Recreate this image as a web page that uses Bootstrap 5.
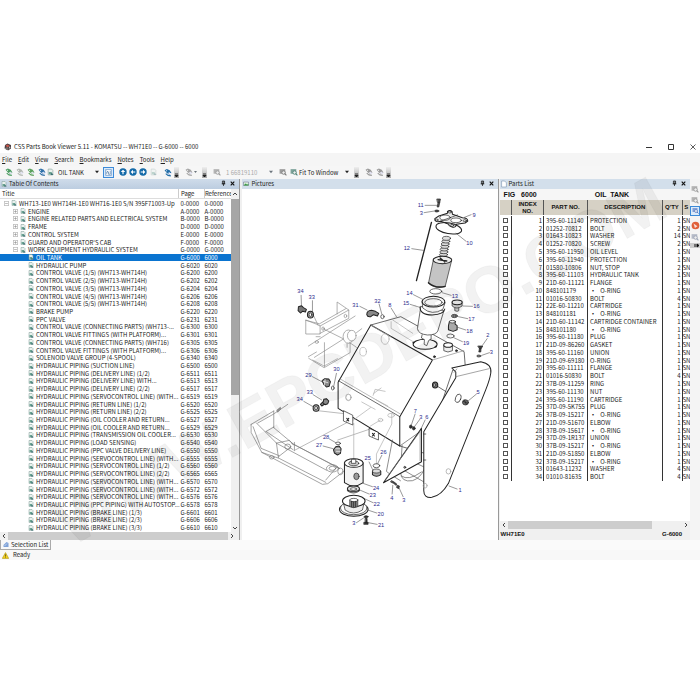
<!DOCTYPE html>
<html lang="en">
<head>
<meta charset="utf-8">
<meta name="viewport" content="width=device-width, initial-scale=1">
<title>CSS Parts Book Viewer 5.11</title>
<link rel="stylesheet" href="https://cdn.jsdelivr.net/npm/bootstrap@5.3.0/dist/css/bootstrap.min.css">
<style>
:root{--ui:"Noto Sans CJK SC","Liberation Sans",sans-serif}
body{font:6px/8px var(--ui);color:#222;background:#fff}
.viewer{height:60vh}
.titlebar{height:13px;font:6px/13px var(--ui);padding-left:4px;gap:2px}
.menubar{height:13px;background:#f5f5f5;font:6px/13px var(--ui);gap:6px;padding-left:2px}
.menubar a{color:#222;text-decoration:none}
.toolstrip{height:13px;background:#f6f6f6;padding-left:3px}
.toolstrip button,.sidebar button,.pane-head button,.titlebar button{border:0;background:none;padding:0;display:flex;align-items:center;justify-content:center;color:#222}
.toolstrip button{width:11px;height:11px}
.toolstrip .rounds button{width:10px}
.toolstrip button.on,.sidebar button.on{border:1px solid #3c8ad8;background:#dcebfa}
.toolstrip select{appearance:none;border:0;background:none;padding:0;height:11px;font:6px/11px var(--ui);color:#222}
.toolstrip select:disabled{color:#aaa;opacity:1}
.pick-book{width:37px}.pick-zoom{width:43px}.pick-fit{width:46px}
.grip{width:5px;height:11px;margin-left:1px;background:linear-gradient(#eee,#aaa);color:#111}
.panes{display:grid;grid-template-columns:34.2% 3px 1fr 2px 27.2% 10px;min-height:0}
.gutter{background:#f0f0f0;border-left:1px solid #999}
.pane{min-width:0;min-height:0;background:#fff}
.pane-head{height:10px;line-height:10px;background:linear-gradient(#cfdcea,#bccde0);gap:2px;padding:0 3px 0 1px}
.pane-head.idle{background:#d3dfeb}
.pane-head button{width:7px;height:9px}
.fill{min-height:0}
table{border-collapse:collapse;table-layout:fixed;width:100%;height:100%}
.toc{font:6px/7px var(--ui)}
.toc th{height:10px;font:6px/9px var(--ui);border-right:1px solid #ccc;border-bottom:1px solid #ddd;padding:0 1px 0 2px}
.toc th:last-child{border-right:0;padding:0}
.toc td{padding:0 0 0 2px;white-space:nowrap;vertical-align:middle}
.toc td:last-child{padding:0}
.toc .c-page{width:26px}.toc .c-ref{width:27px}
.toc .picked td{background:#0a74d0;color:#fff}
.node{display:flex;align-items:center;height:7px;gap:2px}
.node svg{flex:none}
.lv0{padding-left:2px}.lv1{padding-left:11px}.lv2{padding-left:26px}
.sb-v{width:8px;background:#f0f0f0}
.sb-v div{flex:0 0 57%;background:#a6a6a6}
.sb-h{height:8px;background:#f0f0f0}
.sb-h div{background:#cdcdcd}
.toc-thumb{flex:0 0 92%}.parts-thumb{flex:0 0 76%}
.fig{height:11px;font:bold 7px/11px "Liberation Sans",sans-serif;background:#f6f6f6;color:#111}
.fig div:first-child{width:50%;padding-left:4px}
.parts-wrap{height:87.5%}
.parts{font:6px/7px var(--ui)}
.parts th{height:16px;background:#d6d1c5;font:bold 6px/7px "Liberation Sans",sans-serif;text-align:center;color:#111;border-right:1px solid #555;border-bottom:1px solid #fff;padding:0;overflow:hidden}
.parts td{padding:0 0 0 2px;border-right:1px solid #333;white-space:nowrap;vertical-align:middle}
.parts td:nth-child(1){padding:0}
.parts td:nth-child(2),.parts td:nth-child(5){text-align:right;padding:0 1px}
.parts td:last-child,.parts th:last-child{border-right:0;padding:0}
.parts .w-a{width:12px}.parts .w-b{width:32px}.parts .w-c{width:44px}.parts .w-e{width:20px}.parts .w-f{width:8px}
.parts input{appearance:none;display:block;width:5px;height:5px;border:1px solid #555;background:#fff;margin:0 0 0 3px}
.foot{height:11px;font:bold 6px/11px "Liberation Sans",sans-serif;background:#f0f0f0;color:#111;padding:0 8px 0 1px}
.sidebar{background:#f4f4f4;padding-top:5px;gap:1px}
.sidebar button{width:10px;height:10px}
.tabs{height:10px;background:#fafafa;font:6px/9px var(--ui)}
.tabs button{font:inherit;color:#222;border:1px solid #aaa;border-top:0;background:#f8f8f8;padding:0 2px;display:flex;align-items:center;gap:2px}
.status{height:10px;background:#f8f8f8;font:6px/10px var(--ui);gap:4px;padding-left:2px}
.veil{pointer-events:none}
.drawing{width:100%;height:100%;display:block}
</style>
<script src="https://cdn.jsdelivr.net/npm/bootstrap@5.3.0/dist/js/bootstrap.bundle.min.js"></script>
</head>
<body class="position-relative min-vh-100 d-flex flex-column justify-content-center">
<svg width="0" height="0" class="position-absolute" aria-hidden="true">
<defs>
<symbol id="page" viewBox="0 0 12 12"><path d="M2 1h6l2 2v8H2z" fill="#e9f1ee" stroke="#7d9a94"/><path d="M3 6h5v4H3z" fill="#6aa392"/><path d="M8 7l3 4H6z" fill="#3b6f73"/></symbol>
<symbol id="plus" viewBox="0 0 9 9"><path d="M.5.5h8v8h-8zM2 4.500h5M4.500 2v5" fill="#fff" stroke="#888"/></symbol>
<symbol id="minus" viewBox="0 0 9 9"><path d="M.5.5h8v8h-8zM2 4.500h5" fill="#fff" stroke="#888"/></symbol>
<symbol id="tri" viewBox="0 0 6 6"><path d="M0 1h6L3 5z" fill="currentColor"/></symbol>
<symbol id="gripdots" viewBox="0 0 5 11"><path d="M1 7h3M1 8.500h3L2.500 10z" stroke="currentColor" stroke-width=".8"/></symbol>
<symbol id="tags" viewBox="0 0 14 14"><path d="M1 3l4-2 5 2 3 5-3 3-5-3z" fill="currentColor"/><path d="M3 9l4 3 5 1" fill="none" stroke="currentColor" stroke-width="2"/><circle cx="4.500" cy="4" r="1" fill="#fff"/><path d="M7 8l3-2v2h3v2h-3v1z" fill="#eef"/></symbol>
<symbol id="pin" viewBox="0 0 7 9"><path d="M2 1h3v4H2zM1 5h5M3.500 5v3" fill="none" stroke="#111"/><path d="M4 1v4" stroke="#111"/></symbol>
<symbol id="cross" viewBox="0 0 7 7"><path d="M1 1l5 5M6 1L1 6" stroke="#111" stroke-width="1.600"/></symbol>
<symbol id="scan" viewBox="0 0 14 14"><path d="M1 2h10v8H1z" fill="currentColor" opacity=".7"/><circle cx="8" cy="8" r="3" fill="#eee" stroke="currentColor" stroke-width="1.500"/><path d="M10 10l3 3" stroke="currentColor" stroke-width="2"/></symbol>
</defs>
</svg>

<main class="viewer d-flex flex-column">
<header class="titlebar d-flex align-items-center">
<svg width="8" height="8" viewBox="0 0 16 16" aria-hidden="true"><path d="M2 4l5-3 7 3v7l-6 4-4-4H1z" fill="#493f43"/><path d="M3 5l5-2 3 3-4 3z" fill="#c8574a"/><circle cx="6" cy="11" r="3" fill="#766d6a"/><path d="M10 7l3 1-2 4z" fill="#ddd"/></svg>
<span>CSS Parts Book Viewer 5.11 - KOMATSU -- WH71E0 -- G-6000 -- 6000</span>
<div class="ms-auto d-flex align-items-center gap-3 pe-1">
<button aria-label="Minimize"><svg width="6" height="6"><path d="M0 3.500h6" stroke="#333"/></svg></button>
<button aria-label="Maximize"><svg width="6" height="6"><path d="M.5.5h5v5h-5z" fill="none" stroke="#333"/></svg></button>
<button aria-label="Close"><svg width="6" height="6"><path d="M.5.5l5 5m0-5l-5 5" stroke="#333" stroke-width=".8"/></svg></button>
</div>
</header>
<nav class="menubar d-flex" aria-label="Main menu">
<a href="#"><u>F</u>ile</a><a href="#"><u>E</u>dit</a><a href="#"><u>V</u>iew</a><a href="#"><u>S</u>earch</a><a href="#"><u>B</u>ookmarks</a><a href="#"><u>N</u>otes</a><a href="#"><u>T</u>ools</a><a href="#"><u>H</u>elp</a>
</nav>
<div class="toolstrip d-flex align-items-center" role="toolbar" aria-label="Tools">
<button aria-label="Back" style="color:#4c9d62"><svg width="8" height="8"><use href="#tags"/></svg></button>
<button aria-label="Forward" style="color:#b2b8b2"><svg width="8" height="8"><use href="#tags"/></svg></button>
<button aria-label="Up" style="color:#5aa15c"><svg width="8" height="8"><use href="#tags"/></svg></button>
<button aria-label="Home" style="color:#2f70a8"><svg width="8" height="8"><use href="#tags"/></svg></button>
<svg width="7" height="8" class="me-1" aria-hidden="true"><use href="#page"/></svg>
<select class="pick-book" aria-label="Figure"><option>OIL TANK</option></select><svg width="4" height="4" aria-hidden="true"><use href="#tri"/></svg>
<button class="on ms-1" aria-label="Contents"><svg width="7" height="7" viewBox="0 0 12 12"><path d="M1 1h10v10H1z" fill="#fff" stroke="#4b83bd"/><path d="M3 3l2 2M3 9V5h3v4h3V3" fill="none" stroke="#37699c"/></svg></button>
<span class="rounds ms-1 d-flex">
<button aria-label="Top"><svg width="8" height="8" viewBox="0 0 14 14"><circle cx="7" cy="7" r="6.500" fill="#146aa8"/><path d="M7 3l4 4H8v4H6V7H3z" fill="#fff"/></svg></button>
<button aria-label="Previous"><svg width="8" height="8" viewBox="0 0 14 14"><circle cx="7" cy="7" r="6.500" fill="#146aa8"/><path d="M3 7l4-4v3h4v2H7v3z" fill="#fff"/></svg></button>
<button aria-label="Next"><svg width="8" height="8" viewBox="0 0 14 14"><circle cx="7" cy="7" r="6.500" fill="#146aa8"/><path d="M11 7L7 3v3H3v2h4v3z" fill="#fff"/></svg></button>
<button aria-label="Page"><svg width="7" height="8" opacity=".4"><use href="#page"/></svg></button></span>
<button class="ms-1" aria-label="Bookmark" style="color:#236ea8"><svg width="8" height="9"><use href="#tags"/></svg></button>
<svg class="grip" aria-hidden="true"><use href="#gripdots"/></svg>
<button class="ms-1" aria-label="Note" style="color:#a5a5a5"><svg width="8" height="8"><use href="#tags"/></svg></button>
<svg width="3" height="4" class="text-secondary me-1" aria-hidden="true"><use href="#tri"/></svg>
<svg class="grip" aria-hidden="true"><use href="#gripdots"/></svg>
<button class="ms-1 me-1" aria-label="Selection" style="color:#999"><svg width="8" height="8"><use href="#scan"/></svg></button>
<select class="pick-zoom" aria-label="Zoom value" disabled><option>1 66819110</option></select><svg width="4" height="4" class="text-secondary me-1" aria-hidden="true"><use href="#tri"/></svg>
<button aria-label="Zoom area" style="color:#777"><svg width="8" height="8"><use href="#scan"/></svg></button>
<button aria-label="Fit" style="color:#4a8073"><svg width="8" height="8"><use href="#scan"/></svg></button>
<select class="pick-fit" aria-label="Fit mode"><option>Fit To Window</option></select><svg width="4" height="4" class="me-1" aria-hidden="true"><use href="#tri"/></svg>
<svg class="grip" aria-hidden="true"><use href="#gripdots"/></svg>
<button class="ms-1" aria-label="Rotate left" style="color:#9a9a9a"><svg width="8" height="8"><use href="#tags"/></svg></button>
<button aria-label="Rotate right" style="color:#9a9a9a"><svg width="8" height="8"><use href="#tags"/></svg></button>
<svg class="grip" aria-hidden="true"><use href="#gripdots"/></svg>
</div>

<div class="panes flex-grow-1">
<section class="pane d-flex flex-column">
<div class="pane-head d-flex align-items-center"><svg width="6" height="8" aria-hidden="true"><use href="#page"/></svg><span class="me-auto">Table Of Contents</span><button aria-label="Pin contents"><svg width="5" height="7"><use href="#pin"/></svg></button><button aria-label="Close contents"><svg width="5" height="5"><use href="#cross"/></svg></button></div>
<div class="fill flex-grow-1 d-flex">
<div class="flex-grow-1 h-100 overflow-hidden">
<table class="toc"><thead><tr><th>Title</th><th class="c-page">Page</th><th class="c-ref">Reference</th></tr></thead><tbody id="tocRows"></tbody></table>
</div>
<div class="sb-v d-flex flex-column align-items-stretch" aria-hidden="true">
<svg width="8" height="10"><path d="M2 6l2-2 2 2" fill="none" stroke="#444"/></svg><div></div>
<svg width="8" height="8" class="mt-auto"><path d="M2 3l2 2 2-2" fill="none" stroke="#444"/></svg></div>
</div>
<div class="sb-h d-flex" aria-hidden="true"><svg width="8" height="8"><path d="M5 2L3 4l2 2" fill="none" stroke="#444"/></svg><div class="toc-thumb"></div><svg width="8" height="8"><path d="M3 2l2 2-2 2" fill="none" stroke="#444"/></svg></div>
</section>
<div class="gutter"></div>

<section class="pane d-flex flex-column">
<div class="pane-head idle d-flex align-items-center"><svg width="6" height="7" viewBox="0 0 12 12" aria-hidden="true"><path d="M1 3h10v7H1z" fill="#dcefdc" stroke="#668"/><path d="M1 10l4-4 3 2 3-1v3z" fill="#3b9b45"/></svg><span class="me-auto">Pictures</span><button aria-label="Pin pictures"><svg width="5" height="7"><use href="#pin"/></svg></button><button aria-label="Close pictures"><svg width="5" height="5"><use href="#cross"/></svg></button></div>
<div class="fill flex-grow-1">
<svg class="drawing" viewBox="3 -3 765 1053" role="img" aria-label="Oil tank exploded view" fill="none" stroke="#222" stroke-width="2" stroke-linejoin="round" stroke-linecap="round">
<!-- left bracket and frame -->
<g stroke="#8a8a8a" stroke-width="2">
<path d="M194 391v41h43v-24zM237 408l86-48v25l-86 45M288 372v-36l35 24M236 401l78-45M194 391l40 10M202 468l140-90M202 500l24-14M220 502l120-76M203 505l46 28 78-45v-35M250 458v72M225 440l12 0"/>
<ellipse cx="246" cy="416" rx="4" ry="5"/><ellipse cx="313" cy="378" rx="4" ry="5"/><ellipse cx="227" cy="456" rx="5" ry="4"/>
<path d="M246 416l80 40M217 376l14 30"/>
<ellipse cx="322" cy="440" rx="16" ry="20" fill="#fff"/><ellipse cx="332" cy="437" rx="13" ry="16" fill="#fff"/><ellipse cx="366" cy="485" rx="11" ry="13" fill="#fff"/>
<path d="M326 458l32 22M346 428l16-12M318 462v10"/>
</g>
<!-- lower left pipe frame -->
<g transform="translate(0 510)" stroke="#777">
<path d="M30 193l68-40M50 189l46-26 44-30M98 153v50M30 193v24l32 60 182 96 16-2 44-34M46 189l60 60 6 44M36 200l24 65 54 22M98 203l60 50 138 72M76 215l80 54M62 277l52 18 140 72M105 249l152 82M152 250l144 76M254 360l34-40M160 272v-25M107 249l38-8 12 14M74 215l24-14M112 290l36-28"/>
<ellipse cx="274" cy="325" rx="18" ry="11"/><ellipse cx="274" cy="325" rx="10" ry="6"/><ellipse cx="298" cy="334" rx="8" ry="10"/><ellipse cx="140" cy="260" rx="9" ry="8"/><ellipse cx="92" cy="292" rx="7" ry="5"/>
<path d="M108 150l10-8v6l-8 8z" fill="#999"/>
<path d="M230 152l80 9M162 270l170-90M290 240l100-34M215 0l34 18 40-22" stroke-width="1.500"/>
</g>
<!-- tank body -->
<g fill="#fff" stroke-width="3">
<path d="M389 405l90-25 190 105 4 50-38 5-84 250-75-22z" stroke-width="2"/>
<path d="M389 405l-98 172v78l185 113v-88l98-170z"/>
<path d="M292 572l184 108" stroke-width="2"/><path d="M296 566l182 106" stroke="#999" stroke-width="2"/>
<path d="M574 510l94-28" stroke="#888" stroke-width="2"/>
</g>
<g stroke="#aaa" stroke-width="2">
<path d="M389 405l60 36M450 395v20l66 40M455 390l60 40M398 610l22-16M396 616l6-18 30 6M406 630l34 18M362 636l40 22M338 700v110M452 672l0 30-46 90v30M330 695l58-42M418 690l-30 18"/>
<ellipse cx="322" cy="622" rx="8" ry="10"/><ellipse cx="432" cy="447" rx="12" ry="16"/><ellipse cx="418" cy="690" rx="7" ry="5"/><ellipse cx="450" cy="676" rx="10" ry="6"/><ellipse cx="366" cy="485" rx="10" ry="13"/>
</g>
<path d="M307 663v30l28 12v-28zM384 716v22l28 12v-22z" fill="#fff"/><path d="M317 685l6 8m0-8l-6 8M394 730l6 8m0-8l-6 8" stroke-width="3"/>
<!-- filter column -->
<g transform="translate(369 0)">
<path d="M219 27h10l-2 10h-6zM222 37l-3 14h5l3-14" fill="#555"/><ellipse cx="218" cy="63" rx="6" ry="3" fill="#444"/>
<path d="M212 86l12-8 26-8 0-6q8-6 14 1l1 8 30 10q16 0 16 10l-8 6-26 4q-2 11-13 8t-10-8l-24-9q-18 4-18-8z" fill="#eee" stroke-width="3"/>
<ellipse cx="243" cy="83" rx="16" ry="8" fill="#fff"/><ellipse cx="276" cy="91" rx="16" ry="7" fill="#fff"/><path d="M230 93l50-18"/>
<ellipse cx="217" cy="90" rx="5" ry="3"/><ellipse cx="257" cy="66" rx="5" ry="3"/><ellipse cx="302" cy="92" rx="5" ry="3"/><ellipse cx="264" cy="106" rx="5" ry="3"/>
<ellipse cx="254" cy="115" rx="39" ry="16" transform="rotate(10 254 115)" stroke-width="3"/>
<g fill="#ddd"><ellipse cx="237" cy="202" rx="12" ry="5"/><ellipse cx="238" cy="194" rx="12" ry="5"/><ellipse cx="239" cy="186" rx="12" ry="5"/><ellipse cx="240" cy="178" rx="12" ry="5"/><ellipse cx="242" cy="170" rx="12" ry="5"/><ellipse cx="243" cy="162" rx="12" ry="5"/><ellipse cx="245" cy="154" rx="12" ry="5"/><ellipse cx="247" cy="145" rx="12" ry="6"/></g>
<path d="M202 97l-45 175" stroke-width="4"/>
<path d="M208 208l-15 72q20 18 50 10l19-76z" fill="#c4c4c4"/><path d="M193 278q20 18 50 11" stroke-width="4"/>
<ellipse cx="235" cy="210" rx="28" ry="11" fill="#eee" stroke-width="3"/><path d="M222 209l26 4m-20-9l14 12" stroke-width="4"/>
<ellipse cx="215" cy="304" rx="18" ry="8"/>
<ellipse cx="183" cy="463" rx="36" ry="15" stroke-width="3"/>
<path d="M174 434l-2 10 9 5-1 14 8 4 6-16 7-4 0-12" fill="#fff"/><path d="M170 350l-10 66q2 16 30 19 26 0 31-12l18-60z" fill="#fff"/>
<path d="M174 334l2 20q28 24 60 4l7-20" fill="#fff"/><ellipse cx="208" cy="335" rx="34" ry="16" fill="#fff" stroke-width="3"/><ellipse cx="208" cy="337" rx="26" ry="11"/>
<path d="M168 350q-2 24 36 25 36-2 38-18" stroke-width="3"/>
<path d="M264 336v12q14 12 30 0v-12M272 354v8q8 4 12 0v-8" fill="#ccc"/><ellipse cx="279" cy="337" rx="15" ry="7" fill="#eee" stroke-width="3"/>
<ellipse cx="271" cy="378" rx="9" ry="5" fill="#999"/><ellipse cx="271" cy="378" rx="4" ry="2" fill="#fff"/>
<path d="M256 394h17v8l6 5v12l-12 5-14-5v-12z" fill="#aaa" stroke-width="3"/><ellipse cx="265" cy="395" rx="9" ry="4" fill="#eee"/>
<ellipse cx="259" cy="438" rx="11" ry="6"/>
<path d="M239 466v16q12 8 26 0v-16" fill="#eee"/><ellipse cx="252" cy="465" rx="13" ry="7" fill="#fff" stroke-width="3"/>
<g fill="#333"><circle cx="211" cy="500" r="3"/><circle cx="277" cy="482" r="3"/><circle cx="148" cy="458" r="2"/><circle cx="215" cy="470" r="2"/></g>
<path d="M8 374q0-12 14-13l12 3 10 6-4 8-12-4-8 6q-10 2-12-6z" fill="#888" stroke-width="3"/><ellipse cx="55" cy="380" rx="5" ry="6"/>
<path d="M342 468h14l-4 7h-6zM346 475l-2 11h6l1-11" fill="#444"/><ellipse cx="344" cy="498" rx="6" ry="3" fill="#888"/>
</g>
<!-- right plate, brackets and fittings -->
<g transform="translate(369 510)">
<path d="M107 258l65-46M114 256l-5 80q2 32 36 26 24-8 34-32M85 240l-18 94 10 8 32 20M118 330l60 35M120 285v40M148 306l30 14M112 348q20 16 60-12" stroke="#555"/>
<path d="M263 24l87-19q34 6 30 34-3 20-15 50L253 370q-22 38-50 42-24 2-24-20V215l96-162V36z" fill="#fff" stroke-width="3"/>
<path d="M275 50l100-24M270 37l8-10" stroke="#777"/>
<path d="M58 368l114-163v100z" fill="#fff" stroke-width="3"/><path d="M64 358l104-144v88" stroke="#777"/><circle cx="122" cy="322" r="3" fill="#999"/>
<path d="M179 222h6m-6 78h6" />
<ellipse cx="213" cy="75" rx="8" ry="9" fill="#777" stroke-width="3"/><ellipse cx="212" cy="75" rx="3" ry="4" fill="#fff"/><path d="M222 80l24 15"/>
<ellipse cx="282" cy="115" rx="8" ry="13" transform="rotate(20 282 115)"/><ellipse cx="304" cy="127" rx="9" ry="8" fill="#666"/><path d="M297 124l14 6m-10-10l6 14"/>
<ellipse cx="253" cy="334" rx="7" ry="8" stroke="#999"/><ellipse cx="183" cy="377" rx="6" ry="7" stroke="#999"/>
<ellipse cx="140" cy="200" rx="4" ry="5" fill="#333"/><ellipse cx="149" cy="205" rx="4" ry="5" fill="#333"/>
<path d="M80 366l8 4 8 6 2-4-8-6-7-4zM100 376l6 2-2 8-6-3z" fill="#444"/>
<ellipse cx="37" cy="317" rx="10" ry="6"/><path d="M25 334v10q12 10 25 0v-10" fill="#aaa" stroke-width="3"/><ellipse cx="37" cy="333" rx="12" ry="6" fill="#ddd"/>
</g>
<!-- lower filter and small fittings -->
<g transform="translate(0 510)">
<path d="M310 308v60q28 20 56 0v-60z" fill="#f4f4f4" stroke-width="3"/><ellipse cx="338" cy="309" rx="28" ry="13" fill="#fff" stroke-width="3"/><ellipse cx="338" cy="310" rx="15" ry="7" fill="#ccc"/><path d="M332 298h12v12h-12z" fill="#fff"/>
<ellipse cx="346" cy="349" rx="8" ry="10" fill="#999"/>
<path d="M319 386v7q18 12 36 0v-7" fill="#bbb"/><ellipse cx="337" cy="386" rx="18" ry="8" fill="#ddd" stroke-width="3"/><ellipse cx="337" cy="387" rx="9" ry="4" fill="#fff"/>
<ellipse cx="338" cy="448" rx="43" ry="21" fill="#eee" stroke-width="3"/><ellipse cx="338" cy="444" rx="40" ry="20" fill="#fff"/><path d="M306 424l6 26q25 18 52 0l6-26" fill="#eee"/>
<ellipse cx="338" cy="423" rx="34" ry="17" fill="#fff" stroke-width="3"/><path d="M326 420v20q12 6 24 0v-20" fill="#999"/><ellipse cx="338" cy="420" rx="12" ry="5" fill="#fff"/><path d="M332 424v16m6-15v16m6-17v16" stroke-width="3"/>
<ellipse cx="375" cy="470" rx="6" ry="3" fill="#333"/><path d="M373 475h5v12h-5zM369 487h12v6h-12z" fill="#333"/>
<path d="M243 62l8-6 12 1 5 8-4 14-8 2-8-8z" fill="#888" stroke-width="3"/><path d="M246 64l14 4m-8-10l-2 18" stroke="#fff"/><ellipse cx="275" cy="84" rx="4" ry="6"/>
<path d="M248 118l8-2 7 7-3 8-8 3-6-5zM246 125l-8 8 4 5 9-6" fill="#888" stroke-width="3"/><ellipse cx="225" cy="144" rx="9" ry="10" fill="#aaa" stroke-width="3"/><ellipse cx="225" cy="144" rx="4" ry="5" fill="#fff"/>
<ellipse cx="291" cy="250" rx="7" ry="4"/><path d="M284 260l10-2 6 8-2 14-9 5-9-6-3-10z" fill="#999" stroke-width="3"/><path d="M284 266h12m-10 8h11" stroke="#fff"/>
<ellipse cx="322" cy="112" rx="8" ry="9" stroke="#aaa"/>
</g>
<!-- upper left bolt and washer -->
<path d="M172 350l9-3 6 6 9 5-3 8-9-2-6 5-7-7z" fill="#777" stroke-width="3"/><ellipse cx="208" cy="374" rx="9" ry="10" fill="#999" stroke-width="3"/><ellipse cx="208" cy="374" rx="4" ry="5" fill="#fff"/>
<g id="leaders" stroke-width="1.500" stroke="#333"></g>
<g id="callouts" fill="#2b2b8c" stroke="none" font-family="Liberation Sans, sans-serif" font-size="17" text-anchor="middle"></g>
</svg>
</div>
</section>
<div class="gutter"></div>

<section class="pane d-flex flex-column">
<div class="pane-head idle d-flex align-items-center"><svg width="6" height="8" viewBox="0 0 10 12" aria-hidden="true"><path d="M1 1h5l3 3v7H1z" fill="#fff" stroke="#7a93b0"/></svg><span class="me-auto">Parts List</span><button aria-label="Pin parts"><svg width="5" height="7"><use href="#pin"/></svg></button><button aria-label="Close parts"><svg width="5" height="5"><use href="#cross"/></svg></button></div>
<div class="fig d-flex"><div>FIG &nbsp; 6000</div><div>OIL &nbsp;TANK</div></div>
<div class="fill flex-grow-1">
<div class="parts-wrap overflow-hidden">
<table class="parts"><thead><tr><th class="w-a"></th><th class="w-b">INDEX<br>NO.</th><th class="w-c">PART NO.</th><th>DESCRIPTION</th><th class="w-e">Q'TY</th><th class="w-f">S</th></tr></thead><tbody id="partRows"></tbody></table>
</div></div>
<div class="sb-h d-flex" aria-hidden="true"><svg width="8" height="8"><path d="M5 2L3 4l2 2" fill="none" stroke="#444"/></svg><div class="parts-thumb"></div><svg width="8" height="8" class="ms-auto"><path d="M3 2l2 2-2 2" fill="none" stroke="#444"/></svg></div>
<div class="foot d-flex justify-content-between"><span>WH71E0</span><span>G-6000</span></div>
</section>

<div class="sidebar d-flex flex-column align-items-center">
<button aria-label="Add" style="color:#999"><svg width="8" height="8"><use href="#scan"/></svg></button>
<button aria-label="Remove" style="color:#999"><svg width="8" height="8"><use href="#scan"/></svg></button>
<button class="on" aria-label="List" style="color:#5d7fc4"><svg width="7" height="7"><use href="#scan"/></svg></button>
<button class="mt-1" aria-label="Alert"><svg width="9" height="9" viewBox="0 0 14 14"><circle cx="7" cy="7" r="6" fill="#e0603a"/><path d="M4 4l6 4-4 3z" fill="#fff" opacity=".8"/></svg></button>
<button aria-label="Search" style="color:#9aa3b5"><svg width="8" height="8"><use href="#scan"/></svg></button>
<svg width="10" height="5" aria-hidden="true"><path d="M0 0h10v5H0z" fill="#ccc"/><path d="M5 1v3M7 1v3l2-1.500z" stroke="#111"/></svg>
</div>
</div>
<div class="tabs d-flex"><button><svg width="6" height="7" viewBox="0 0 12 12" aria-hidden="true"><path d="M1 7l6-6 4 2v8H1z" fill="#7fa2d8"/><path d="M3 9l5-5" stroke="#fff"/></svg>Selection List</button></div>
<footer class="status d-flex align-items-center"><svg width="7" height="7" viewBox="0 0 12 12" aria-hidden="true"><path d="M6 1l5.500 10H.5z" fill="#f5d21c" stroke="#a98f12"/><path d="M6 4v4M6 9v1" stroke="#222"/></svg><span>Ready</span></footer>
</main>

<svg class="veil position-absolute top-0 start-0 w-100 h-100" viewBox="0 0 700 700" aria-hidden="true">
<text x="360" y="361" transform="rotate(-29 360 361)" text-anchor="middle" dominant-baseline="central" font-family="Liberation Sans, sans-serif" font-weight="bold" font-size="65" fill="#000" fill-opacity=".05" stroke="#000" stroke-opacity=".03">WWW.EPCDEPO.COM</text>
</svg>

<script>
const toc = `0|WH713-1E0 WH714H-1E0 WH716-1E0 S/N 395F71003-Up|0-0000|0-0000
1|ENGINE|A-0000|A-0000
1|ENGINE RELATED PARTS AND ELECTRICAL SYSTEM|B-0000|B-0000
1|FRAME|D-0000|D-0000
1|CONTROL SYSTEM|E-0000|E-0000
1|GUARD AND OPERATOR'S CAB|F-0000|F-0000
1|WORK EQUIPMENT HYDRAULIC SYSTEM|G-0000|G-0000
2|OIL TANK|G-6000|6000
2|HYDRAULIC PUMP|G-6020|6020
2|CONTROL VALVE (1/5)  (WH713-WH714H)|G-6200|6200
2|CONTROL VALVE (2/5)  (WH713-WH714H)|G-6202|6202
2|CONTROL VALVE (3/5)  (WH713-WH714H)|G-6204|6204
2|CONTROL VALVE (4/5)  (WH713-WH714H)|G-6206|6206
2|CONTROL VALVE (5/5)  (WH713-WH714H)|G-6208|6208
2|BRAKE PUMP|G-6220|6220
2|PPC VALVE|G-6231|6231
2|CONTROL VALVE (CONNECTING PARTS) (WH713-...|G-6300|6300
2|CONTROL VALVE FITTINGS (WITH PLATFORM)...|G-6301|6301
2|CONTROL VALVE (CONNECTING PARTS) (WH716)|G-6305|6305
2|CONTROL VALVE FITTINGS (WITH PLATFORM)...|G-6306|6306
2|SOLENOID VALVE GROUP (4-SPOOL)|G-6340|6340
2|HYDRAULIC PIPING (SUCTION LINE)|G-6500|6500
2|HYDRAULIC PIPING (DELIVERY LINE) (1/2)|G-6511|6511
2|HYDRAULIC PIPING (DELIVERY LINE) WITH...|G-6513|6513
2|HYDRAULIC PIPING (DELIVERY LINE) (2/2)|G-6517|6517
2|HYDRAULIC PIPING (SERVOCONTROL LINE) (WITH...|G-6519|6519
2|HYDRAULIC PIPING (RETURN LINE) (1/2)|G-6520|6520
2|HYDRAULIC PIPING (RETURN LINE) (2/2)|G-6525|6525
2|HYDRAULIC PIPING (OIL COOLER AND RETURN...|G-6527|6527
2|HYDRAULIC PIPING (OIL COOLER AND RETURN...|G-6529|6529
2|HYDRAULIC PIPING (TRANSMISSION OIL COOLER...|G-6530|6530
2|HYDRAULIC PIPING (LOAD SENSING)|G-6540|6540
2|HYDRAULIC PIPING (PPC VALVE DELIVERY LINE)|G-6550|6550
2|HYDRAULIC PIPING (SERVOCONTROL LINE) (WITH...|G-6555|6555
2|HYDRAULIC PIPING (SERVOCONTROL LINE) (1/2)|G-6560|6560
2|HYDRAULIC PIPING (SERVOCONTROL LINE) (2/2)|G-6565|6565
2|HYDRAULIC PIPING (SERVOCONTROL LINE) (WITH...|G-6570|6570
2|HYDRAULIC PIPING (SERVOCONTROL LINE) (WITH...|G-6572|6572
2|HYDRAULIC PIPING (SERVOCONTROL LINE) (WITH...|G-6576|6576
2|HYDRAULIC PIPING (PPC PIPING) WITH AUTOSTOP...|G-6578|6578
2|HYDRAULIC PIPING (BRAKE LINE) (1/3)|G-6601|6601
2|HYDRAULIC PIPING (BRAKE LINE) (2/3)|G-6606|6606
2|HYDRAULIC PIPING (BRAKE LINE) (3/3)|G-6610|6610`.split("\n").map(r => r.split("|"));
document.getElementById("tocRows").innerHTML = toc.map(([lv, t, p, r]) => {
  const box = lv === "2" ? "" : `<svg width="5" height="5"><use href="#${lv === "0" || t.startsWith("WORK") ? "minus" : "plus"}"/></svg>`;
  return `<tr class="${t === "OIL TANK" ? "picked" : ""}"><td><div class="node lv${lv}">${box}<svg width="6" height="6"><use href="#page"/></svg><span>${t}</span></div></td><td>${p}</td><td>${r}</td></tr>`;
}).join("");

const parts = `395-60-11140|PROTECTION|1
01252-70812|BOLT|2
01643-10823|WASHER|14
01252-70820|SCREW|2
395-60-11950|OIL LEVEL|1
395-60-11940|PROTECTION|1
01580-10806|NUT, STOP|2
395-60-11103|HYDRAULIC TANK|1
21D-60-11121|FLANGE|1
848101179|*O-RING|1
01016-50830|BOLT|4
22E-60-11210|CARTRIDGE|1
848101181|*O-RING|1
21D-60-11142|CARTRIDGE CONTAINER|1
848101180|*O-RING|1
395-60-11180|PLUG|1
21D-09-86260|GASKET|1
395-60-11160|UNION|1
21D-09-69180|O-RING|1
395-60-11111|FLANGE|1
01016-50830|BOLT|4
37B-09-11259|RING|1
395-60-11130|NUT|1
395-60-11190|CARTRIDGE|1
37D-09-5K755|PLUG|1
37B-09-15217|*O-RING|1
21D-09-51670|ELBOW|1
37B-09-15617|*O-RING|1
37D-09-1R137|UNION|1
37B-09-15217|*O-RING|1
21D-09-51850|ELBOW|1
37B-09-15217|*O-RING|1
01643-11232|WASHER|4
01010-81635|BOLT|4`.split("\n").map(r => r.split("|"));
document.getElementById("partRows").innerHTML = parts.map(([n, d, q], i) =>
  `<tr><td><input type="checkbox" aria-label="Select item ${i + 1}"></td><td>${i + 1}</td><td>${n}</td><td>${d.replace("*", "<b>·</b>&nbsp;&nbsp; ")}</td><td>${q}</td><td>SN</td></tr>`).join("");

// number, label centre, then the leader's two ends
const marks = [
[11,539,46,552,46,588,46],[3,541,70,549,68,580,63],[9,699,74,690,74,670,82],[10,685,159,675,154,645,130],[12,497,174,512,176,546,181],
[13,641,318,630,316,603,308],[14,505,310,517,314,545,328],[15,495,340,507,343,536,352],[16,706,349,694,349,666,348],[17,691,388,680,386,652,380],
[18,685,423,674,420,650,412],[19,675,459,664,455,638,443],[32,409,332,414,342,422,372],[8,446,345,450,354,466,380],[2,740,436,738,446,724,466],
[3,751,487,745,488,722,496],[34,178,304,180,316,181,345],[33,212,321,214,332,214,364],[31,343,345,356,349,378,360],[29,202,554,214,560,244,576],
[30,286,538,286,550,278,588],[33,206,607,216,614,242,630],[34,176,627,188,634,216,650],[28,255,742,265,747,284,758],[27,234,764,246,768,276,776],
[25,380,803,384,816,396,842],[26,427,786,422,796,410,820],[24,405,894,394,890,366,880],[23,395,916,384,912,356,900],[22,407,942,396,938,370,926],
[20,419,973,407,969,380,960],[21,420,1005,408,1003,382,998],[3,338,1000,346,998,370,982],[4,452,925,453,912,455,886],[3,488,931,486,920,474,894],
[1,657,901,648,897,624,888],[5,711,606,706,612,682,632],[7,523,664,522,672,511,704],[3,539,680,536,688,520,710],[6,557,680,552,690,540,716]];
document.getElementById("callouts").innerHTML = marks.map(m => `<text x="${m[1]}" y="${m[2] + 6}">${m[0]}</text>`).join("");
document.getElementById("leaders").innerHTML = marks.map(m => `<path d="M${m[3]} ${m[4]}L${m[5]} ${m[6]}"/>`).join("");
</script>
</body>
</html>
